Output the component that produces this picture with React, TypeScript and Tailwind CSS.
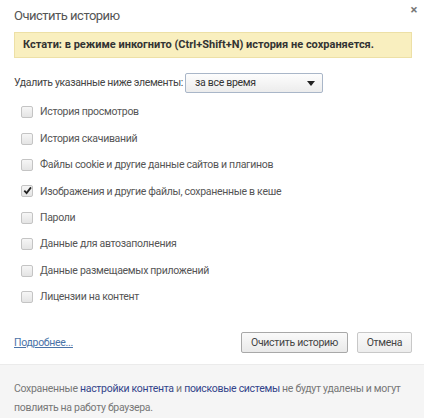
const items = [
  { label: "История просмотров", checked: false },
  { label: "История скачиваний", checked: false },
  { label: "Файлы cookie и другие данные сайтов и плагинов", checked: false },
  { label: "Изображения и другие файлы, сохраненные в кеше", checked: true },
  { label: "Пароли", checked: false },
  { label: "Данные для автозаполнения", checked: false },
  { label: "Данные размещаемых приложений", checked: false },
  { label: "Лицензии на контент", checked: false },
];

function Checkbox({ checked }: { checked: boolean }) {
  return (
    <span className="relative w-[12px] h-[12px] rounded-[2px] border border-[#c4c4c4] bg-gradient-to-b from-[#f6f6f6] to-[#e4e4e4] shrink-0">
      {checked && (
        <svg viewBox="0 0 12 12" className="absolute left-[0px] top-[-1px] w-[11px] h-[11px]">
          <path d="M2.5 6.2 L5 8.8 L9.8 2.6" fill="none" stroke="#222" strokeWidth="2" />
        </svg>
      )}
    </span>
  );
}

export default function App() {
  return (
    <div
      className="w-[424px] h-[418px] bg-white relative flex flex-col text-[10.5px] tracking-[-0.3px] text-[#444]"
      style={{ fontFamily: 'Roboto, "Noto Sans", sans-serif' }}
    >
      <button className="absolute right-[7px] top-[3px] text-[#777] text-[13px] font-bold leading-none">
        ×
      </button>

      <div className="pl-[14px] pr-[12px] flex flex-col">
        <h1 className="pt-[6px] leading-[20px] text-[13px] tracking-[-0.5px] text-[#555]">Очистить историю</h1>

        <div className="mt-[6px] h-[26px] flex items-center px-[8px] bg-[#f9efbf] border border-[#ede0a6] text-[11px] tracking-[0px] font-bold text-[#333] whitespace-nowrap">
          Кстати: в режиме инкогнито (Ctrl+Shift+N) история не сохраняется.
        </div>

        <div className="mt-[15px] h-[20px] flex items-center">
          <span className="w-[171px] whitespace-nowrap tracking-[-0.35px] text-[#444]">Удалить указанные ниже элементы:</span>
          <div className="w-[138px] h-[20px] flex items-center justify-between pl-[9px] pr-[7px] rounded-[2px] border border-[#a9b6c8] bg-gradient-to-b from-[#fdfdfd] to-[#ececec]">
            <span className="text-[#333]">за все время</span>
            <svg viewBox="0 0 8 5" className="w-[8px] h-[5px]">
              <path d="M0 0 H8 L4 5 Z" fill="#222" />
            </svg>
          </div>
        </div>

        <ul className="mt-[6px] flex flex-col">
          {items.map((it) => (
            <li key={it.label} className="h-[26.43px] flex items-center pl-[7px] gap-[7px]">
              <Checkbox checked={it.checked} />
              <span className="text-[#555]">{it.label}</span>
            </li>
          ))}
        </ul>

        <div className="mt-[22px] h-[21px] flex items-center justify-between">
          <a href="#" className="text-[#4a73a8] underline">Подробнее...</a>
          <div className="flex gap-[9px]">
            <button className="w-[107px] h-[21px] rounded-[2px] border border-[#a8a8a8] bg-gradient-to-b from-[#fafafa] to-[#e9e9e9] text-[#444] whitespace-nowrap">
              Очистить историю
            </button>
            <button className="w-[55px] h-[21px] rounded-[2px] border border-[#c8c8c8] bg-gradient-to-b from-[#fafafa] to-[#ededed] text-[#444]">
              Отмена
            </button>
          </div>
        </div>
      </div>

      <div className="mt-auto h-[54px] border-t border-[#ebebeb] bg-[#f5f5f5] pl-[14px] pr-[8px] pt-[14px] leading-[19px] text-[#777]">
        <p>
          Сохраненные <span className="text-[#33448a]">настройки контента</span> и{" "}
          <span className="text-[#33448a]">поисковые системы</span> не будут удалены и могут
        </p>
        <p>повлиять на работу браузера.</p>
      </div>
    </div>
  );
}
